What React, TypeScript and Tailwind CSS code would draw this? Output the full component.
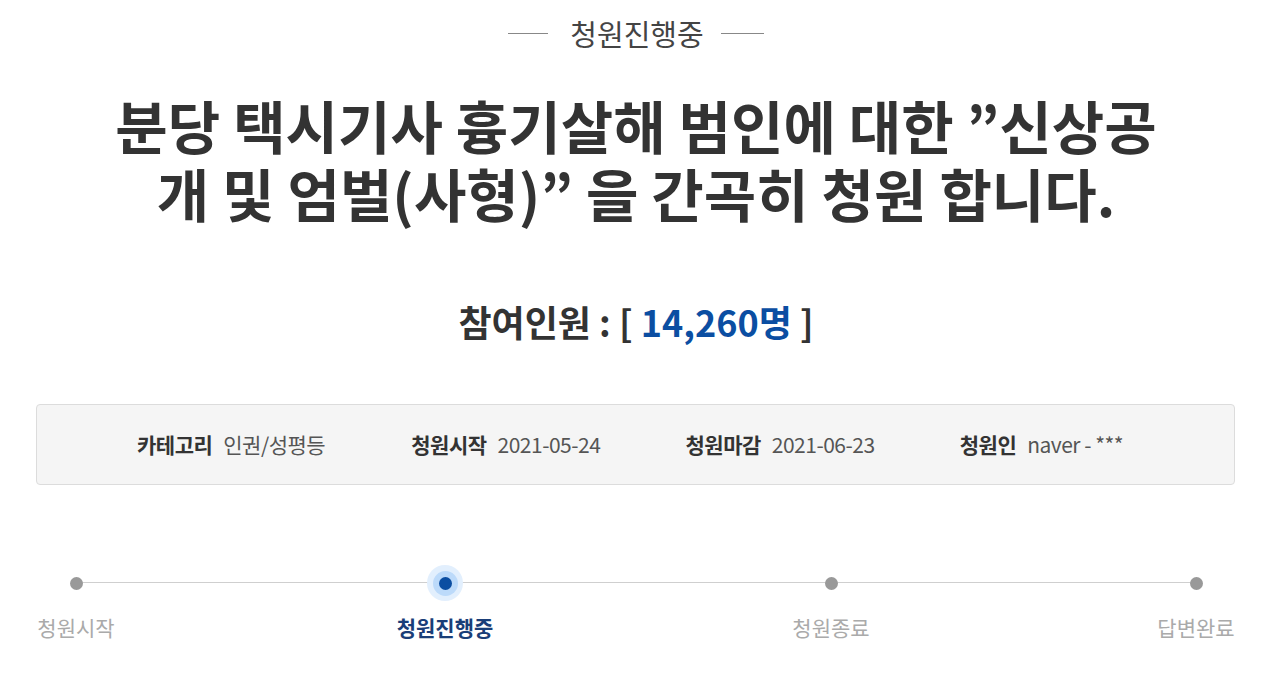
export default function App() {
  const steps = [
    { label: "청원시작", active: false, w: "w-[78px]", ml: "" },
    { label: "청원진행중", active: true, w: "w-[98px]", ml: "ml-[281px]" },
    { label: "청원종료", active: false, w: "w-[78px]", ml: "ml-[298px]" },
    { label: "답변완료", active: false, w: "w-[78px]", ml: "ml-[287px]" },
  ];
  const info = [
    { k: "카테고리", v: "인권/성평등" },
    { k: "청원시작", v: "2021-05-24" },
    { k: "청원마감", v: "2021-06-23" },
    { k: "청원인", v: "naver - ***" },
  ];

  return (
    <div
      className="min-h-[683px] w-[1272px] bg-white text-[#333]"
      style={{ fontFamily: '"Noto Sans CJK KR", "Noto Sans", sans-serif' }}
    >
      <div className="flex items-center justify-center pt-[12px]">
        <span className="h-px w-[40px] bg-[#888]" />
        <span className="ml-[22px] mr-[17px] text-[29px] leading-[42px] text-[#444]">청원진행중</span>
        <span className="h-px w-[43px] bg-[#888]" />
      </div>

      <h1 className="mt-[36px] whitespace-nowrap text-center text-[57px] font-bold leading-[68px] text-[#333]">
        <span className="block">분당 택시기사 흉기살해 범인에 대한 ”신상공</span>
        <span className="block">개 및 엄벌(사형)” 을 간곡히 청원 합니다.</span>
      </h1>

      <div className="mt-[73px] text-center text-[36px] font-bold leading-[44px] text-[#333]">
        참여인원 : [ <span className="text-[#0b4ea2]">14,260명</span> ]
      </div>

      <div className="ml-[36px] mt-[61px] flex h-[81px] w-[1199px] items-center rounded-[4px] border border-[#dcdcdc] bg-[#f5f5f5] pl-[100px]">
        {info.map((i) => (
          <div key={i.k} className="flex w-[277px] items-center gap-[11px] text-[21px]">
            <span className="font-bold tracking-[-0.5px] text-[#333]">{i.k}</span>
            <span className="tracking-[-0.5px] text-[#555]">{i.v}</span>
          </div>
        ))}
      </div>

      <div className="relative mt-[84px] flex pl-[37px]">
        <div className="absolute left-[75px] top-[13px] h-px w-[1120px] bg-[#cfcfcf]" />
        {steps.map((s) => (
          <div key={s.label} className={`relative flex flex-col items-center ${s.w} ${s.ml}`}>
            <div className="flex h-[28px] w-[28px] items-center justify-center">
              {s.active ? (
                <div className="flex h-[36px] w-[36px] shrink-0 items-center justify-center rounded-full bg-[#e2effd]">
                  <div className="flex h-[25px] w-[25px] items-center justify-center rounded-full bg-[#bcdafa]">
                    <div className="h-[13px] w-[13px] rounded-full bg-[#0b4ea2]" />
                  </div>
                </div>
              ) : (
                <div className="h-[13px] w-[13px] rounded-full bg-[#999]" />
              )}
            </div>
            <span
              className={
                s.active
                  ? "mt-[15px] whitespace-nowrap text-[21px] font-bold text-[#1a3e78]"
                  : "mt-[15px] whitespace-nowrap text-[21px] text-[#aaa]"
              }
            >
              {s.label}
            </span>
          </div>
        ))}
      </div>
    </div>
  );
}
